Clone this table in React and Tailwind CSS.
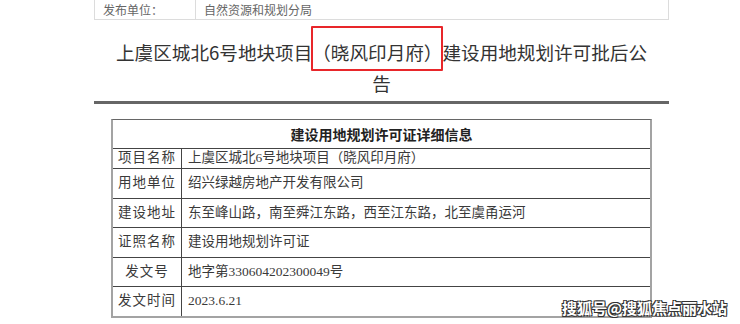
import React from "react";

const rows = [
  { label: "项目名称", value: "上虞区城北6号地块项目（晓风印月府）", h: "h-[20px]" },
  { label: "用地单位", value: "绍兴绿越房地产开发有限公司", h: "h-[30px]" },
  { label: "建设地址", value: "东至峰山路，南至舜江东路，西至江东路，北至虞甬运河", h: "h-[29px]" },
  { label: "证照名称", value: "建设用地规划许可证", h: "h-[30px]" },
  { label: "发文号", value: "地字第330604202300049号", h: "h-[29px]" },
  { label: "发文时间", value: "2023.6.21", h: "h-[29px]" },
];

export default function App() {
  return (
    <div className="relative w-[740px] h-[324px] overflow-hidden bg-white font-['Noto_Sans_CJK_SC',sans-serif]">
      <div className="ml-[94px] w-[575px]">
        {/* publisher bar */}
        <div className="flex h-[20px] border-x border-b border-[#dcdcdc] text-[12px] leading-[19px] text-[#666]">
          <div className="w-[101px] pl-[8px] border-r border-[#dcdcdc]">发布单位：</div>
          <div className="pl-[8px]">自然资源和规划分局</div>
        </div>

        {/* title */}
        <h1 className="pt-[16px] pb-[3px] text-center text-[18.6px] leading-[31px] text-[#333] font-normal">
          上虞区城北6号地块项目
          <span className="relative">
            （晓风印月府）
            <span className="absolute -top-[12px] -bottom-[6px] -left-[1px] -right-[1px] border-2 border-[#e8262a] rounded-[1px]" />
          </span>
          建设用地规划许可批后公
          <br />
          告
        </h1>
        <div className="h-[3px] bg-[#666]" />
      </div>

      {/* detail table */}
      <div className="ml-[111px] mt-[15px] w-[541px] border-t border-t-[#666] border-x-2 border-b-2 border-x-[#a3a3a3] border-b-[#a3a3a3] text-[13.5px] text-[#3a3a3a] font-['Liberation_Serif','Noto_Sans_CJK_SC',serif]">
        <div className="h-[29px] flex items-center justify-center border-b border-[#444] font-bold text-[14px] text-[#222] font-['Noto_Sans_CJK_SC',sans-serif]">
          建设用地规划许可证详细信息
        </div>
        {rows.map((r, i) => (
          <div
            key={r.label}
            className={`flex ${r.h} ${i < rows.length - 1 ? "border-b border-[#444]" : ""}`}
          >
            <div className="w-[69px] shrink-0 flex items-center justify-center border-r border-[#444] tracking-[1px]">
              {r.label}
            </div>
            <div className="flex items-center pl-[6px]">{r.value}</div>
          </div>
        ))}
      </div>

      {/* watermark */}
      <div className="absolute left-[562px] top-[298px] text-[15px] leading-[20px] text-white font-bold [text-shadow:1px_1px_0_#333,-1px_-1px_0_#333,1px_-1px_0_#333,-1px_1px_0_#333]">
        搜狐号@搜狐焦点丽水站
      </div>
    </div>
  );
}
